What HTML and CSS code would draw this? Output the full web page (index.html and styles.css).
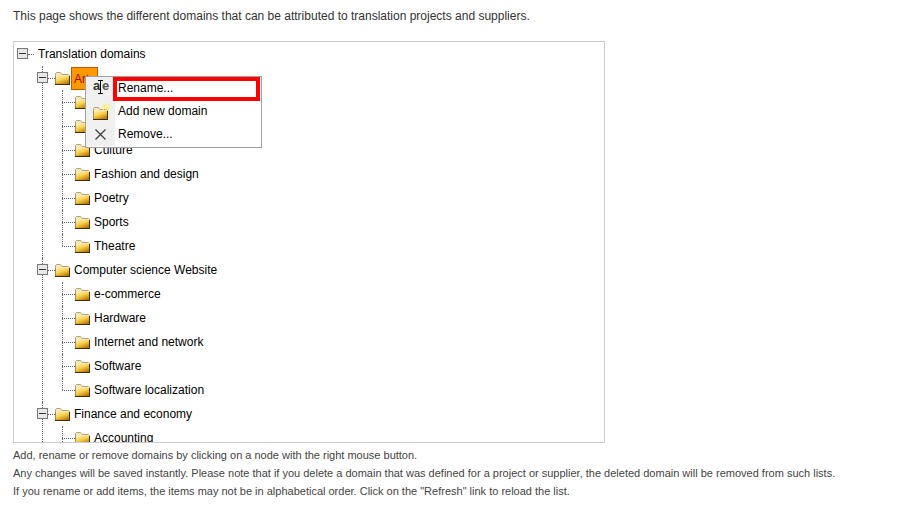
FILE: index.html
```html
<!DOCTYPE html>
<html lang="en">
<head>
  <meta charset="UTF-8" />
  <title>Translation domains</title>
  <link rel="stylesheet" href="styles.css">
</head>
<body>
  <svg class="defs" width="0" height="0">
    <defs>
      <linearGradient id="folder-fill" x1="0" y1="0" x2="0.6" y2="1">
        <stop offset="0" stop-color="#fff4bc" />
        <stop offset="0.5" stop-color="#fbd04c" />
        <stop offset="1" stop-color="#b87c06" />
      </linearGradient>
      <symbol id="folder" viewBox="0 0 15 13">
        <path d="M0.5 3V1.5L1.5 0.5H5.5L7 2.5H13.5L14.5 3.5V12.5H0.5Z" fill="#f5e9bd" stroke="#b5a36a" />
        <path d="M0.5 4H14.5V12.5H0.5Z" fill="url(#folder-fill)" />
        <path d="M0.5 4V12.5" fill="none" stroke="#a08c4c" />
        <path d="M0 12.5H15M14.5 4V13" stroke="#3e3008" />
      </symbol>
    </defs>
  </svg>

  <p class="intro">This page shows the different domains that can be attributed to translation projects and suppliers.</p>

  <div class="tree-box">
    <ul class="tree">
      <li>
        <div class="row"><span class="toggle"></span><span class="dots root-dots"></span><span class="label">Translation domains</span></div>
        <ul class="level1">
          <li>
            <div class="row"><span class="toggle"></span><span class="dots"></span><svg class="folder"><use href="#folder" /></svg><span class="label selected">Arts</span></div>
            <ul class="level2">
              <li><div class="row"><span class="dots long"></span><svg class="folder"><use href="#folder" /></svg><span class="label">Architecture</span></div></li>
              <li><div class="row"><span class="dots long"></span><svg class="folder"><use href="#folder" /></svg><span class="label">Cinema</span></div></li>
              <li><div class="row"><span class="dots long"></span><svg class="folder"><use href="#folder" /></svg><span class="label">Culture</span></div></li>
              <li><div class="row"><span class="dots long"></span><svg class="folder"><use href="#folder" /></svg><span class="label">Fashion and design</span></div></li>
              <li><div class="row"><span class="dots long"></span><svg class="folder"><use href="#folder" /></svg><span class="label">Poetry</span></div></li>
              <li><div class="row"><span class="dots long"></span><svg class="folder"><use href="#folder" /></svg><span class="label">Sports</span></div></li>
              <li><div class="row"><span class="dots long"></span><svg class="folder"><use href="#folder" /></svg><span class="label">Theatre</span></div></li>
            </ul>
          </li>
          <li>
            <div class="row"><span class="toggle"></span><span class="dots"></span><svg class="folder"><use href="#folder" /></svg><span class="label">Computer science Website</span></div>
            <ul class="level2">
              <li><div class="row"><span class="dots long"></span><svg class="folder"><use href="#folder" /></svg><span class="label">e-commerce</span></div></li>
              <li><div class="row"><span class="dots long"></span><svg class="folder"><use href="#folder" /></svg><span class="label">Hardware</span></div></li>
              <li><div class="row"><span class="dots long"></span><svg class="folder"><use href="#folder" /></svg><span class="label">Internet and network</span></div></li>
              <li><div class="row"><span class="dots long"></span><svg class="folder"><use href="#folder" /></svg><span class="label">Software</span></div></li>
              <li><div class="row"><span class="dots long"></span><svg class="folder"><use href="#folder" /></svg><span class="label">Software localization</span></div></li>
            </ul>
          </li>
          <li>
            <div class="row"><span class="toggle"></span><span class="dots"></span><svg class="folder"><use href="#folder" /></svg><span class="label">Finance and economy</span></div>
            <ul class="level2">
              <li><div class="row"><span class="dots long"></span><svg class="folder"><use href="#folder" /></svg><span class="label">Accounting</span></div></li>
              <li><div class="row"><span class="dots long"></span><svg class="folder"><use href="#folder" /></svg><span class="label">Banking</span></div></li>
            </ul>
          </li>
        </ul>
      </li>
    </ul>

    <div class="menu">
      <div class="menu-item">
        <span class="menu-icon">
          <svg width="16" height="22" viewBox="0 0 16 22">
            <text x="0" y="12" class="rename-glyph">a</text>
            <text x="9" y="12" class="rename-glyph light">e</text>
            <path d="M5 2.5H7.5M10 2.5H7.5M7.5 2.5V15.5M5 15.5H10" fill="none" stroke="#000" />
          </svg>
        </span>
        <span class="menu-text">Rename...</span>
      </div>
      <div class="menu-item">
        <span class="menu-icon">
          <svg class="add-icon" width="17" height="17" viewBox="0 0 17 17">
            <use href="#folder" x="0" y="4" width="15" height="13" />
            <path d="M13 0V8M9 4H17M10 1L16 7M16 1L10 7" stroke="#fff03a" />
            <path d="M11.5 2.5H14.5V5.5H11.5Z" fill="#fff9a8" />
          </svg>
        </span>
        <span class="menu-text">Add new domain</span>
      </div>
      <div class="menu-item">
        <span class="menu-icon">
          <svg width="13" height="13" viewBox="0 0 13 13">
            <path d="M1.5 1.5L11.5 11.5M11.5 1.5L1.5 11.5" fill="none" stroke="#444" stroke-width="1.4" />
          </svg>
        </span>
        <span class="menu-text">Remove...</span>
      </div>
      <div class="annotation"></div>
    </div>
  </div>

  <div class="notes">
    <p>Add, rename or remove domains by clicking on a node with the right mouse button.</p>
    <p>Any changes will be saved instantly. Please note that if you delete a domain that was defined for a project or supplier, the deleted domain will be removed from such lists.</p>
    <p>If you rename or add items, the items may not be in alphabetical order. Click on the "Refresh" link to reload the list.</p>
  </div>
</body>
</html>
```

FILE: styles.css
```css
body {
  margin: 0;
  padding: 0 13px;
  font-family: "Liberation Sans", Arial, sans-serif;
  font-size: 12px;
  color: #333;
  background: #fff;
  overflow: hidden;
}

.defs {
  position: absolute;
}

.intro {
  margin: 8px 0 17px;
  line-height: 16px;
}

.tree-box {
  position: relative;
  width: 590px;
  height: 400px;
  border: 1px solid #ccc;
  overflow: hidden;
}

.tree,
.tree ul {
  list-style: none;
  margin: 0;
  padding: 0;
}

.tree {
  padding-left: 3px;
  color: #000;
}

.level1 {
  padding-left: 20px !important;
}

.level2 {
  padding-left: 25px !important;
}

.level1 > li,
.level2 > li {
  position: relative;
}

.level1 > li::before,
.level2 > li::before {
  content: '';
  position: absolute;
  top: 0;
  bottom: 0;
  border-left: 1px dotted #666;
}

.level1 > li::before {
  left: 5px;
}

.level2 > li::before {
  left: 0;
}

.level2 > li:last-child::before {
  bottom: 12px;
}

.row {
  position: relative;
  display: flex;
  align-items: center;
  height: 24px;
}

.toggle {
  position: relative;
  z-index: 1;
  box-sizing: border-box;
  flex: none;
  width: 11px;
  height: 11px;
  margin-top: -1px;
  border: 1px solid #777;
  background: #e8e8e8;
}

.toggle::after {
  content: '';
  position: absolute;
  left: 1px;
  right: 1px;
  top: 4px;
  border-top: 1px solid #333;
}

.dots {
  flex: none;
  width: 7px;
  border-top: 1px dotted #666;
}

.root-dots {
  width: 6px;
}

.dots.long {
  width: 13px;
}

.folder {
  flex: none;
  width: 15px;
  height: 13px;
}

.label {
  margin-left: 4px;
  line-height: 16px;
}

.root-dots + .label {
  margin-left: 4px;
}

.selected {
  box-sizing: border-box;
  height: 23px;
  width: 27px;
  margin-left: 1px;
  padding: 3px 2px;
  background: #ff9900;
  border: 1px solid #c05a00;
  color: #b00000;
}

.menu {
  position: absolute;
  left: 71px;
  top: 34px;
  z-index: 2;
  width: 175px;
  padding: 0 0 1px;
  background: #fff;
  border: 1px solid #a0a0a0;
  color: #000;
}

.menu-item {
  display: flex;
  align-items: center;
  height: 23px;
}

.menu-icon {
  display: flex;
  align-items: center;
  justify-content: center;
  flex: none;
  width: 29px;
  height: 100%;
  background: #f0f0f0;
}

.add-icon {
  margin-left: 2px;
}

.menu-text {
  margin: -2px 0 0 3px;
}

.rename-glyph {
  font-family: "Liberation Sans", sans-serif;
  font-size: 13px;
  font-weight: bold;
  fill: #333;
}

.rename-glyph.light {
  fill: #555;
}

.annotation {
  position: absolute;
  left: 27px;
  top: 0;
  width: 139px;
  height: 16px;
  border: 4px solid #f00;
}

.notes {
  margin-top: 3px;
  font-size: 11px;
  color: #444;
}

.notes p {
  margin: 0;
  line-height: 18px;
}
```
